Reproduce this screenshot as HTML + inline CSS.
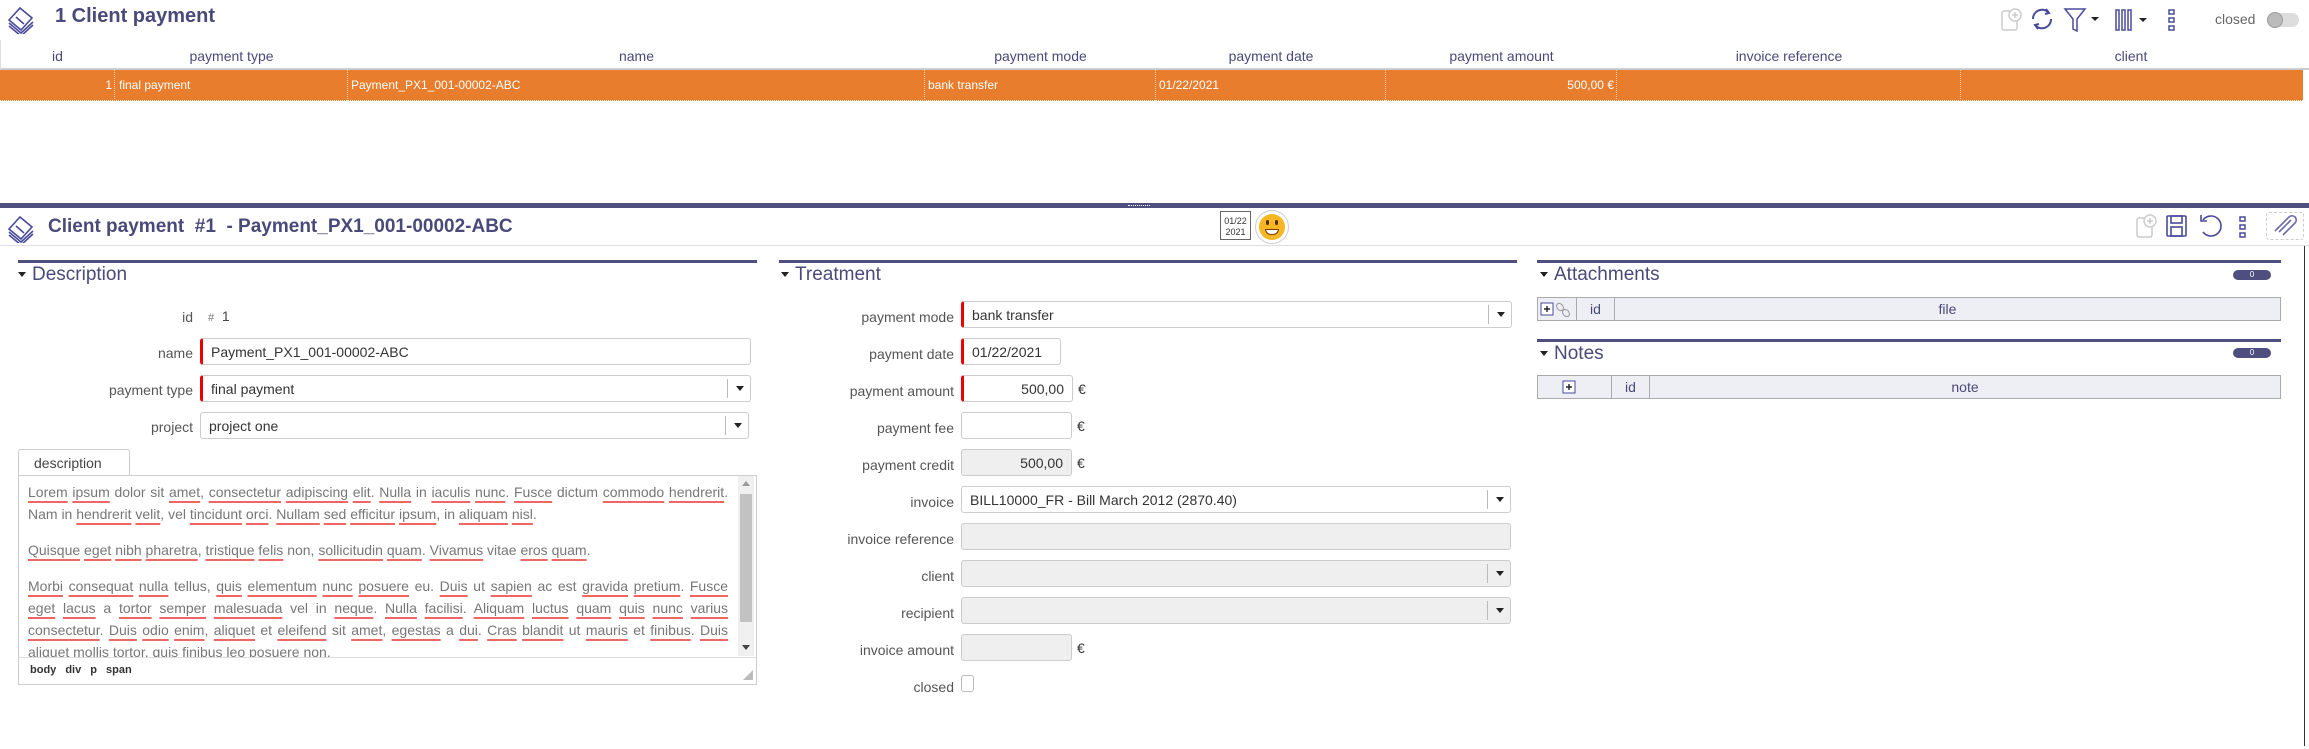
<!DOCTYPE html>
<html><head><meta charset="utf-8"><style>
*{box-sizing:border-box;margin:0;padding:0}
body{width:2309px;height:749px;overflow:hidden;background:#fff;font-family:"Liberation Sans",sans-serif;color:#555;position:relative}
.a{position:absolute}
.t{font-size:14px;white-space:nowrap}
.lbl{position:absolute;text-align:right;font-size:14px;color:#555;white-space:nowrap;margin-top:4px}
.inp{position:absolute;height:27px;border:1px solid #ccc;border-radius:3px;background:#fff;font-size:14px;color:#333;padding:5px 8px;white-space:nowrap}
.req{border-left:3px solid #e00}
.ro{background:#efefef}
.sel::after{content:"";position:absolute;right:6px;top:10px;border-left:4px solid transparent;border-right:4px solid transparent;border-top:5px solid #222}
.sel::before{content:"";position:absolute;right:22px;top:3px;height:19px;border-left:1px solid #bbb}
.sec{position:absolute;border-top:3px solid #4f4f7f}
.st{position:absolute;font-size:19px;color:#4a4a7a}
.st::before{content:"";display:inline-block;border-left:4px solid transparent;border-right:4px solid transparent;border-top:5px solid #222;margin-right:6px;vertical-align:middle}
.eur{position:absolute;font-size:14px;color:#333}
.cell{position:absolute;border-right:1px dotted #f5d2b0;height:31px}
.col{position:absolute;top:44px;height:25px;font-size:14px;color:#4a4a7a;text-align:center;line-height:25px}
.u{text-decoration:underline;text-decoration-color:#e66;text-decoration-thickness:2px;text-underline-offset:4px}
.badge{position:absolute;width:38px;height:10px;border-radius:5px;background:#4f4f7f;color:#fff;font-size:8px;text-align:center;line-height:10px}
.tbl{position:absolute;height:24px;border:1px solid #aaa;background:#eeeef5;font-size:14px;color:#4a4a7a}
.tbl div{position:absolute;top:0;height:22px;line-height:22px;text-align:center;border-right:1px solid #aaa}
</style></head><body>
<svg class="a" style="left:6px;top:4px" width="34" height="30" viewBox="0 0 34 30"><g fill="none" stroke="#4a4a9a" stroke-width="1.6"><path d="M3 16l11-12 12 10-11 12z"/><path d="M3 19l12 10 12-11"/><path d="M3 22l12 10 12-11"/><path d="M10 13l8 7"/></g></svg>
<div class="a" style="left:55px;top:5px;font-size:20px;font-weight:bold;color:#4a4a7a">1 Client payment</div>
<svg class="a" style="left:2000px;top:7px" width="24" height="24"><rect x="2" y="4" width="15" height="19" rx="2" fill="none" stroke="#ccc" stroke-width="1.5"/><circle cx="15" cy="8" r="6" fill="#fff" stroke="#ccc" stroke-width="1.5"/><path d="M15 5v6M12 8h6" stroke="#ccc" stroke-width="1.5"/></svg>
<svg class="a" style="left:2029px;top:7px" width="26" height="24"><g fill="none" stroke="#4a4a9a" stroke-width="2"><path d="M4 12a9 9 0 0 1 15-7"/><path d="M22 12a9 9 0 0 1-15 7"/><path d="M17 2l3 4-4 1M9 22l-3-4 4-1"/></g></svg>
<svg class="a" style="left:2063px;top:7px" width="38" height="26"><path d="M2 2h20l-8 10v12l-4-2V12z" fill="none" stroke="#4a4a9a" stroke-width="1.5"/><path d="M28 10h8l-4 4z" fill="#222"/></svg>
<svg class="a" style="left:2115px;top:8px" width="34" height="24"><g fill="none" stroke="#4a4a9a" stroke-width="1.5"><rect x="1" y="2" width="3" height="20"/><rect x="7" y="2" width="3" height="20"/><rect x="13" y="2" width="3" height="20"/></g><path d="M24 10h8l-4 4z" fill="#222"/></svg>
<svg class="a" style="left:2167px;top:9px" width="10" height="22"><g fill="none" stroke="#4a4a9a" stroke-width="1.5"><rect x="2" y="1" width="5" height="4"/><rect x="2" y="9" width="5" height="4"/><rect x="2" y="17" width="5" height="4"/></g></svg>
<div class="a t" style="left:2215px;top:11px;font-size:14px;color:#666">closed</div>
<div class="a" style="left:2267px;top:13px;width:32px;height:14px;border-radius:7px;background:#ddd"></div>
<div class="a" style="left:2267px;top:12px;width:16px;height:16px;border-radius:8px;background:#bbb;border:1px solid #999"></div>
<div class="a" style="left:0;top:40px;width:2309px;height:30px;border-left:1px solid #ddd;border-bottom:2px solid #ccc"></div>
<div class="col" style="left:0;width:115px">id</div>
<div class="col" style="left:115px;width:233px">payment type</div>
<div class="col" style="left:348px;width:577px">name</div>
<div class="col" style="left:925px;width:231px">payment mode</div>
<div class="col" style="left:1156px;width:230px">payment date</div>
<div class="col" style="left:1386px;width:231px">payment amount</div>
<div class="col" style="left:1617px;width:344px">invoice reference</div>
<div class="col" style="left:1961px;width:340px">client</div>
<div class="a" style="left:0;top:70px;width:2303px;height:31px;background:#e87d2d;border-bottom:1px dotted #fff"></div>
<div class="cell" style="left:0;top:70px;width:115px"></div><div class="cell" style="left:115px;top:70px;width:233px"></div><div class="cell" style="left:348px;top:70px;width:577px"></div><div class="cell" style="left:925px;top:70px;width:231px"></div><div class="cell" style="left:1156px;top:70px;width:230px"></div><div class="cell" style="left:1386px;top:70px;width:231px"></div><div class="cell" style="left:1617px;top:70px;width:344px"></div>
<div class="a t" style="left:0;top:78px;width:112px;text-align:right;color:#fff;font-size:12px">1</div>
<div class="a t" style="left:119px;top:78px;color:#fff;font-size:12px">final payment</div>
<div class="a t" style="left:351px;top:78px;color:#fff;font-size:12px">Payment_PX1_001-00002-ABC</div>
<div class="a t" style="left:928px;top:78px;color:#fff;font-size:12px">bank transfer</div>
<div class="a t" style="left:1159px;top:78px;color:#fff;font-size:12px">01/22/2021</div>
<div class="a t" style="left:1386px;top:78px;width:228px;text-align:right;color:#fff;font-size:12px">500,00 €</div>
<div class="a" style="left:0;top:203px;width:2309px;height:5px;background:#4f4f7f"></div>
<div class="a" style="left:1128px;top:205px;width:22px;height:1px;border-top:1px dotted #fff"></div>
<svg class="a" style="left:6px;top:213px" width="34" height="30" viewBox="0 0 34 30"><g fill="none" stroke="#4a4a9a" stroke-width="1.6"><path d="M3 16l11-12 12 10-11 12z"/><path d="M3 19l12 10 12-11"/><path d="M3 22l12 10 12-11"/><path d="M10 13l8 7"/></g></svg>
<div class="a" style="left:48px;top:216px;font-size:19px;font-weight:bold;color:#4a4a7a;white-space:pre">Client payment  #1  - Payment_PX1_001-00002-ABC</div>
<div class="a" style="left:1220px;top:211px;width:31px;height:29px;border:1.5px solid #666;font-size:9px;line-height:11px;text-align:center;padding-top:4px;color:#333">01/22<br>2021</div>
<div class="a" style="left:1255px;top:210px;width:34px;height:34px;border-radius:17px;border:1px solid #ccc;background:#fff"></div>
<div class="a" style="left:1259px;top:214px;width:26px;height:26px;border-radius:13px;background:#f7b623"></div>
<div class="a" style="left:1265px;top:229px;width:14px;height:6px;border-radius:0 0 7px 7px;background:#fff;border:1px solid #7a3f00"></div>
<div class="a" style="left:1266px;top:220px;width:3px;height:5px;background:#5a2d00;border-radius:2px"></div><div class="a" style="left:1275px;top:220px;width:3px;height:5px;background:#5a2d00;border-radius:2px"></div>
<svg class="a" style="left:2135px;top:212px" width="24" height="28"><rect x="2" y="6" width="15" height="19" rx="2" fill="none" stroke="#ccc" stroke-width="1.5"/><circle cx="15" cy="9" r="6" fill="#fff" stroke="#ccc" stroke-width="1.5"/><path d="M15 6v6M12 9h6" stroke="#ccc" stroke-width="1.5"/></svg>
<svg class="a" style="left:2166px;top:214px" width="22" height="24"><g fill="none" stroke="#4a4a9a" stroke-width="1.6"><rect x="1" y="2" width="19" height="20" rx="1"/><rect x="5" y="2" width="11" height="7"/><rect x="5" y="13" width="11" height="9"/></g></svg>
<svg class="a" style="left:2198px;top:212px" width="26" height="28"><g fill="none" stroke="#4a4a9a" stroke-width="1.6"><path d="M5 8a10 10 0 1 1 0 12"/><path d="M3 3v6h6"/></g></svg>
<svg class="a" style="left:2238px;top:216px" width="10" height="22"><g fill="none" stroke="#4a4a9a" stroke-width="1.5"><rect x="2" y="1" width="5" height="4"/><rect x="2" y="9" width="5" height="4"/><rect x="2" y="17" width="5" height="4"/></g></svg>
<div class="a" style="left:2266px;top:212px;width:38px;height:28px;border:1px dashed #ccc;border-radius:3px"></div>
<svg class="a" style="left:2271px;top:214px" width="28" height="24"><path d="M4 20L18 6a4 4 0 0 1 6 6L12 24" transform="translate(0,-3)" fill="none" stroke="#6a6aaa" stroke-width="1.6"/><path d="M8 18L20 6" fill="none" stroke="#6a6aaa" stroke-width="1.6"/></svg>
<div class="a" style="left:0;top:245px;width:2309px;height:1px;background:#ddd"></div>
<div class="a" style="left:2304px;top:246px;width:1px;height:500px;background:#333"></div>
<div class="sec" style="left:18px;top:260px;width:739px"></div>
<div class="st" style="left:18px;top:264px">Description</div>
<div class="lbl" style="left:0;top:305px;width:193px">id</div>
<div class="a t" style="left:208px;top:308px;color:#444"><span style="font-size:11px;color:#777">#</span>&nbsp;&nbsp;1</div>
<div class="lbl" style="left:0;top:341px;width:193px">name</div>
<div class="inp req" style="left:200px;top:338px;width:551px">Payment_PX1_001-00002-ABC</div>
<div class="lbl" style="left:0;top:378px;width:193px">payment type</div>
<div class="inp req sel" style="left:200px;top:375px;width:551px">final payment</div>
<div class="lbl" style="left:0;top:415px;width:193px">project</div>
<div class="inp sel" style="left:200px;top:412px;width:549px">project one</div>
<div class="a" style="left:18px;top:449px;width:112px;height:27px;border:1px solid #ccc;border-bottom:none;border-radius:3px 3px 0 0;background:#fff;font-size:14px;color:#444;padding:5px 0 0 15px">description</div>
<div class="a" style="left:18px;top:475px;width:739px;height:210px;border:1px solid #ccc"></div>
<div class="a" style="left:738px;top:476px;width:16px;height:180px;background:#f0f0f0"></div>
<div class="a" style="left:740px;top:494px;width:12px;height:128px;background:#c2c2c2"></div>
<div class="a" style="left:742px;top:481px;border-left:4px solid transparent;border-right:4px solid transparent;border-bottom:5px solid #999"></div>
<div class="a" style="left:742px;top:645px;border-left:4px solid transparent;border-right:4px solid transparent;border-top:5px solid #444"></div>
<div class="a" style="left:28px;top:481px;width:700px;height:176px;overflow:hidden;font-size:14px;line-height:22px;color:#777;text-align:justify">
<p><span class="u">Lorem</span> <span class="u">ipsum</span> dolor sit <span class="u">amet</span>, <span class="u">consectetur</span> <span class="u">adipiscing</span> <span class="u">elit</span>. <span class="u">Nulla</span> in <span class="u">iaculis</span> <span class="u">nunc</span>. <span class="u">Fusce</span> dictum <span class="u">commodo</span> <span class="u">hendrerit</span>. Nam in <span class="u">hendrerit</span> <span class="u">velit</span>, vel <span class="u">tincidunt</span> <span class="u">orci</span>. <span class="u">Nullam</span> <span class="u">sed</span> <span class="u">efficitur</span> <span class="u">ipsum</span>, in <span class="u">aliquam</span> <span class="u">nisl</span>.</p>
<p style="margin-top:14px"><span class="u">Quisque</span> <span class="u">eget</span> <span class="u">nibh</span> <span class="u">pharetra</span>, <span class="u">tristique</span> <span class="u">felis</span> non, <span class="u">sollicitudin</span> <span class="u">quam</span>. <span class="u">Vivamus</span> vitae <span class="u">eros</span> <span class="u">quam</span>.</p>
<p style="margin-top:14px"><span class="u">Morbi</span> <span class="u">consequat</span> <span class="u">nulla</span> tellus, <span class="u">quis</span> <span class="u">elementum</span> <span class="u">nunc</span> <span class="u">posuere</span> eu. <span class="u">Duis</span> ut <span class="u">sapien</span> ac est <span class="u">gravida</span> <span class="u">pretium</span>. <span class="u">Fusce</span> <span class="u">eget</span> <span class="u">lacus</span> a <span class="u">tortor</span> <span class="u">semper</span> <span class="u">malesuada</span> vel in <span class="u">neque</span>. <span class="u">Nulla</span> <span class="u">facilisi</span>. <span class="u">Aliquam</span> <span class="u">luctus</span> <span class="u">quam</span> <span class="u">quis</span> <span class="u">nunc</span> <span class="u">varius</span> <span class="u">consectetur</span>. <span class="u">Duis</span> <span class="u">odio</span> <span class="u">enim</span>, <span class="u">aliquet</span> et <span class="u">eleifend</span> sit <span class="u">amet</span>, <span class="u">egestas</span> a <span class="u">dui</span>. <span class="u">Cras</span> <span class="u">blandit</span> ut <span class="u">mauris</span> et <span class="u">finibus</span>. <span class="u">Duis</span> aliquet mollis tortor, quis finibus leo posuere non.</p></div>
<div class="a" style="left:19px;top:657px;width:737px;height:1px;background:#ddd"></div>
<div class="a t" style="left:30px;top:664px;font-size:11px;font-weight:bold;color:#333;word-spacing:6px">body div p span</div>
<div class="a" style="left:743px;top:670px;border-left:10px solid transparent;border-bottom:10px solid #bbb"></div>
<div class="sec" style="left:779px;top:260px;width:738px"></div>
<div class="st" style="left:781px;top:264px">Treatment</div>
<div class="lbl" style="left:780px;top:305px;width:174px">payment mode</div>
<div class="inp req sel" style="left:961px;top:301px;width:551px">bank transfer</div>
<div class="lbl" style="left:780px;top:342px;width:174px">payment date</div>
<div class="inp req" style="left:961px;top:338px;width:100px">01/22/2021</div>
<div class="lbl" style="left:780px;top:379px;width:174px">payment amount</div>
<div class="inp req" style="left:961px;top:375px;width:112px;text-align:right">500,00</div><div class="eur" style="left:1078px;top:381px">€</div>
<div class="lbl" style="left:780px;top:416px;width:174px">payment fee</div>
<div class="inp" style="left:961px;top:412px;width:111px"></div><div class="eur" style="left:1077px;top:418px">€</div>
<div class="lbl" style="left:780px;top:453px;width:174px">payment credit</div>
<div class="inp ro" style="left:961px;top:449px;width:111px;text-align:right">500,00</div><div class="eur" style="left:1077px;top:455px">€</div>
<div class="lbl" style="left:780px;top:490px;width:174px">invoice</div>
<div class="inp sel" style="left:961px;top:486px;width:550px">BILL10000_FR - Bill March 2012 (2870.40)</div>
<div class="lbl" style="left:780px;top:527px;width:174px">invoice reference</div>
<div class="inp ro" style="left:961px;top:523px;width:550px"></div>
<div class="lbl" style="left:780px;top:564px;width:174px">client</div>
<div class="inp ro sel" style="left:961px;top:560px;width:550px"></div>
<div class="lbl" style="left:780px;top:601px;width:174px">recipient</div>
<div class="inp ro sel" style="left:961px;top:597px;width:550px"></div>
<div class="lbl" style="left:780px;top:638px;width:174px">invoice amount</div>
<div class="inp ro" style="left:961px;top:634px;width:111px"></div><div class="eur" style="left:1077px;top:640px">€</div>
<div class="lbl" style="left:780px;top:675px;width:174px">closed</div>
<div class="a" style="left:961px;top:675px;width:13px;height:17px;border:1px solid #bbb;border-radius:3px"></div>
<div class="sec" style="left:1537px;top:260px;width:744px"></div>
<div class="st" style="left:1540px;top:264px">Attachments</div>
<div class="badge" style="left:2233px;top:270px">0</div>
<div class="tbl" style="left:1537px;top:297px;width:744px"><div style="left:0;width:39px"></div><div style="left:39px;width:38px">id</div><div style="left:77px;width:665px;border:none">file</div></div>
<svg class="a" style="left:1540px;top:302px" width="36" height="16"><rect x="1" y="1" width="12" height="12" fill="#fff" stroke="#4a4a9a"/><path d="M7 4v6M4 7h6" stroke="#222" stroke-width="1.4"/><g fill="none" stroke="#999"><ellipse cx="20" cy="5" rx="3" ry="4" transform="rotate(-40 20 5)"/><ellipse cx="26" cy="11" rx="3" ry="4" transform="rotate(-40 26 11)"/></g></svg>
<div class="sec" style="left:1537px;top:339px;width:744px"></div>
<div class="st" style="left:1540px;top:343px">Notes</div>
<div class="badge" style="left:2233px;top:348px">0</div>
<div class="tbl" style="left:1537px;top:375px;width:744px"><div style="left:0;width:74px"></div><div style="left:74px;width:38px">id</div><div style="left:112px;width:630px;border:none">note</div></div>
<svg class="a" style="left:1562px;top:380px" width="16" height="16"><rect x="1" y="1" width="12" height="12" fill="#fff" stroke="#4a4a9a"/><path d="M7 4v6M4 7h6" stroke="#222" stroke-width="1.4"/></svg>
</body></html>
